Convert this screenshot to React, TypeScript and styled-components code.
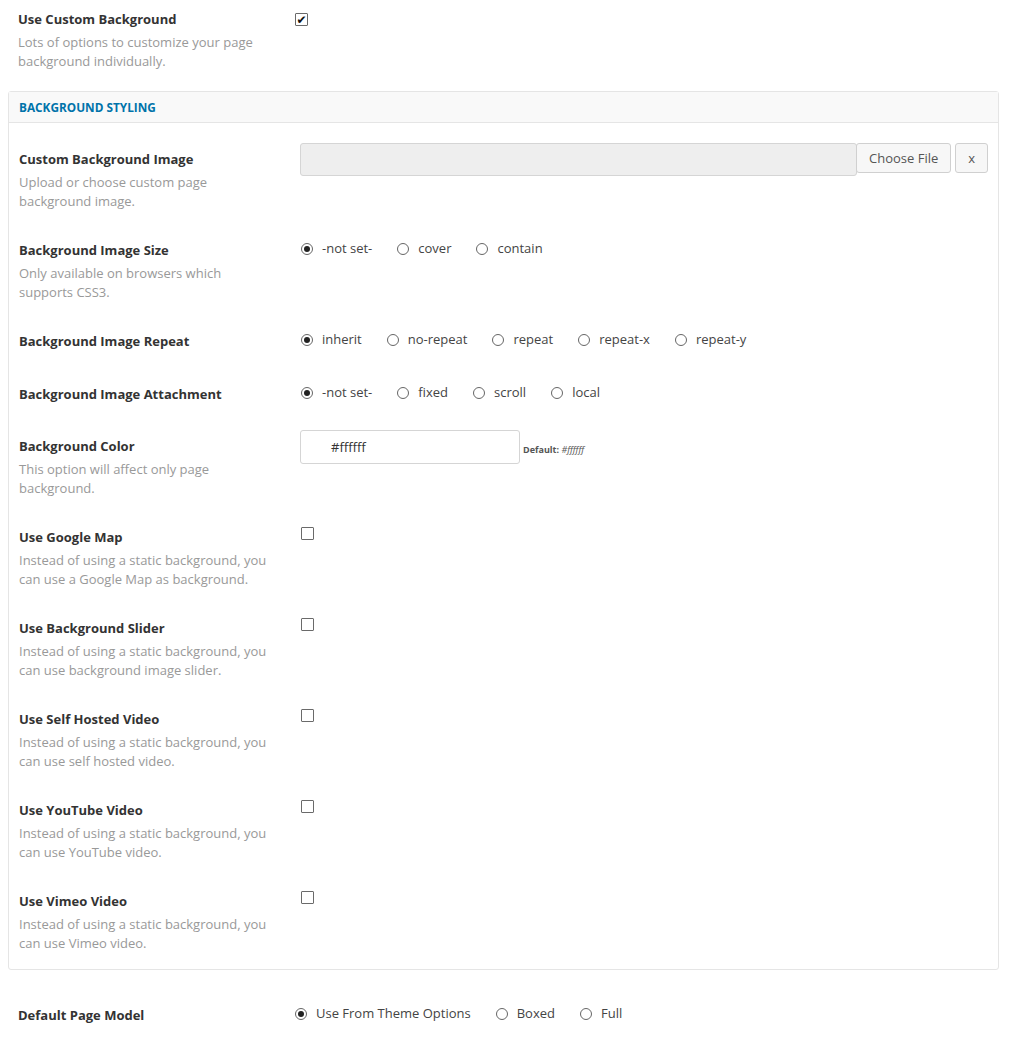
import React from "react";
import styled, { createGlobalStyle } from "styled-components";

const Global = createGlobalStyle`
  html, body { margin: 0; padding: 0; background: #fff; }
  body { font-family: "Open Sans", "Noto Sans", sans-serif; font-size: 13px; color: #444; }
  * { box-sizing: border-box; }
`;

const Page = styled.div`
  padding: 10px 10px 0 8px;
  width: 1009px;
`;

const Row = styled.div<{ $inset?: boolean; $flush?: boolean }>`
  display: grid;
  grid-template-columns: ${(p) => (p.$inset ? "281px" : "276px")} 1fr;
  padding: ${(p) => (p.$flush ? "0" : "15px")} 0 ${(p) => (p.$flush ? "0" : "15px")}
    ${(p) => (p.$inset ? "0" : "10px")};
  align-items: start;
`;

const LabelCol = styled.div`
  display: flex;
  flex-direction: column;
`;

const Label = styled.div`
  font-weight: 700;
  color: #333;
  line-height: 19px;
`;

const Desc = styled.div`
  color: #999;
  line-height: 19px;
  margin-top: 4px;
  width: 252px;
`;

const Panel = styled.div`
  border: 1px solid #e5e5e5;
  border-radius: 3px;
  margin: 20px 0 21px 0;
`;

const PanelHead = styled.div`
  background: #f9f9f9;
  border-bottom: 1px solid #e5e5e5;
  height: 31px;
  display: flex;
  align-items: center;
  padding: 0 0 1px 10px;
  font-size: 11.8px;
  font-weight: 700;
  color: #0073aa;
`;

const PanelBody = styled.div`
  padding: 12px 10px 1px 10px;
`;

const Control = styled.div<{ $short?: boolean }>`
  display: flex;
  align-items: flex-start;
  min-height: ${(p) => (p.$short ? 22 : 23)}px;
`;

const CheckBox = styled.span<{ $top?: number }>`
  width: 13px;
  height: 13px;
  border: 1px solid #6a6a6a;
  border-radius: 1px;
  display: inline-flex;
  align-items: center;
  justify-content: center;
  margin-top: ${(p) => p.$top ?? 1}px;
  margin-left: 1px;
  color: #111;
  font-size: 12px;
  font-weight: 700;
  line-height: 1;
  font-family: "DejaVu Sans", sans-serif;
`;

const RadioGroup = styled.div`
  display: flex;
  align-items: center;
  gap: 24px;
  margin-top: -2px;
`;

const RadioItem = styled.label`
  display: inline-flex;
  align-items: center;
  gap: 9px;
  color: #444;
  line-height: 19px;
`;

const RadioCircle = styled.span<{ $checked?: boolean }>`
  width: 12px;
  height: 12px;
  border-radius: 50%;
  border: 1px solid #666;
  display: inline-flex;
  align-items: center;
  justify-content: center;
  margin-left: 1px;
  &::after {
    content: "";
    width: 6px;
    height: 6px;
    border-radius: 50%;
    background: ${(p) => (p.$checked ? "#222" : "transparent")};
  }
`;

const UploadWrap = styled.div`
  display: flex;
  align-items: flex-start;
  gap: 4px;
  margin-top: -7px;
`;

const FileField = styled.div`
  width: 557px;
  height: 33px;
  background: #eee;
  border: 1px solid #d5d5d5;
  border-radius: 3px;
  margin-right: -5px;
`;

const Btn = styled.button`
  font-family: "Open Sans", "Noto Sans", sans-serif;
  font-size: 13px;
  color: #555;
  background: #f7f7f7;
  border: 1px solid #d0d0d0;
  border-radius: 3px;
  height: 30px;
  padding: 0 12px;
  white-space: nowrap;
  position: relative;
`;

const ColorWrap = styled.div`
  display: flex;
  align-items: center;
  gap: 3px;
  margin-top: -7px;
`;

const ColorInput = styled.div`
  width: 220px;
  height: 34px;
  border: 1px solid #d5d5d5;
  border-radius: 3px;
  display: flex;
  align-items: center;
  padding-left: 30px;
  color: #333;
  font-size: 13px;
`;

const DefaultNote = styled.span`
  font-size: 9px;
  font-weight: 700;
  color: #555;
  margin-top: 4px;
  em {
    font-weight: 400;
  }
`;

type Opt = { label: string; checked?: boolean };

const Radios = ({ opts }: { opts: Opt[] }) => (
  <RadioGroup>
    {opts.map((o) => (
      <RadioItem key={o.label}>
        <RadioCircle $checked={o.checked} />
        {o.label}
      </RadioItem>
    ))}
  </RadioGroup>
);

const Field = ({
  label,
  desc,
  children,
  inset,
  flush,
  short,
}: {
  label: string;
  desc?: string;
  children: React.ReactNode;
  inset?: boolean;
  flush?: boolean;
  short?: boolean;
}) => (
  <Row $inset={inset} $flush={flush}>
    <LabelCol>
      <Label>{label}</Label>
      {desc && <Desc>{desc}</Desc>}
    </LabelCol>
    <Control $short={short}>{children}</Control>
  </Row>
);

const checks = [
  ["Use Google Map", "Instead of using a static background, you can use a Google Map as background."],
  ["Use Background Slider", "Instead of using a static background, you can use background image slider."],
  ["Use Self Hosted Video", "Instead of using a static background, you can use self hosted video."],
  ["Use YouTube Video", "Instead of using a static background, you can use YouTube video."],
  ["Use Vimeo Video", "Instead of using a static background, you can use Vimeo video."],
];

export default function App() {
  return (
    <Page>
      <Global />
      <Field flush label="Use Custom Background" desc="Lots of options to customize your page background individually.">
        <CheckBox $top={3}>✔</CheckBox>
      </Field>
      <Panel>
        <PanelHead>BACKGROUND STYLING</PanelHead>
        <PanelBody>
          <Field inset label="Custom Background Image" desc="Upload or choose custom page background image.">
            <UploadWrap>
              <FileField />
              <Btn>Choose File</Btn>
              <Btn>x</Btn>
            </UploadWrap>
          </Field>
          <Field inset label="Background Image Size" desc="Only available on browsers which supports CSS3.">
            <Radios opts={[{ label: "-not set-", checked: true }, { label: "cover" }, { label: "contain" }]} />
          </Field>
          <Field inset label="Background Image Repeat">
            <Radios
              opts={[
                { label: "inherit", checked: true },
                { label: "no-repeat" },
                { label: "repeat" },
                { label: "repeat-x" },
                { label: "repeat-y" },
              ]}
            />
          </Field>
          <Field inset short label="Background Image Attachment">
            <Radios
              opts={[{ label: "-not set-", checked: true }, { label: "fixed" }, { label: "scroll" }, { label: "local" }]}
            />
          </Field>
          <Field inset label="Background Color" desc="This option will affect only page background.">
            <ColorWrap>
              <ColorInput>#ffffff</ColorInput>
              <DefaultNote>
                Default: <em>#ffffff</em>
              </DefaultNote>
            </ColorWrap>
          </Field>
          {checks.map(([l, d]) => (
            <Field inset key={l} label={l} desc={d}>
              <CheckBox $top={-1} />
            </Field>
          ))}
        </PanelBody>
      </Panel>
      <Field label="Default Page Model">
        <Radios opts={[{ label: "Use From Theme Options", checked: true }, { label: "Boxed" }, { label: "Full" }]} />
      </Field>
    </Page>
  );
}
